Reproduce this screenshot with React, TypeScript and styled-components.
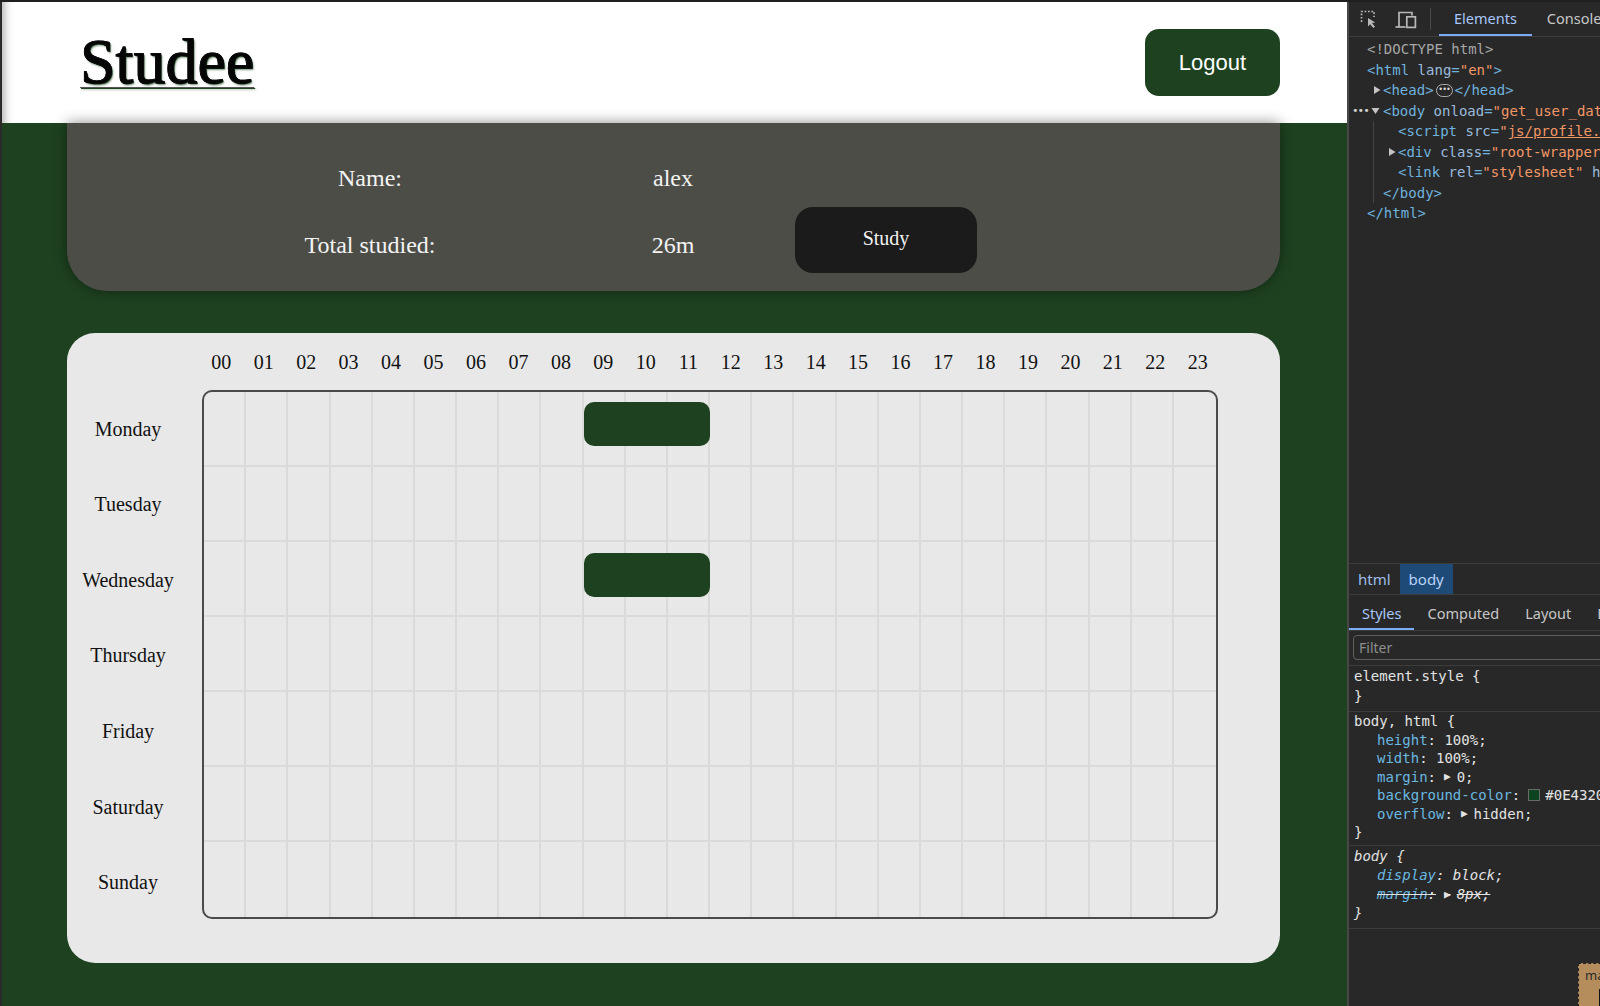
import React from "react";
import styled, { createGlobalStyle } from "styled-components";

const GREEN = "#1e4220";
const SERIF = `"Liberation Serif", "Times New Roman", serif`;
const SANS = `"Liberation Sans", Arial, sans-serif`;
const UI = `"Noto Sans", "Open Sans", sans-serif`;
const MONO = `"DejaVu Sans Mono", "Liberation Mono", monospace`;

const Global = createGlobalStyle`
  html, body { margin: 0; padding: 0; width: 1600px; height: 1006px; overflow: hidden; background: #1f1f1f; }
  *, *::before, *::after { box-sizing: border-box; }
`;

const Frame = styled.div`
  width: 1600px;
  height: 1006px;
  border-top: 2px solid #1f1f1f;
  display: flex;
  overflow: hidden;
`;

/* ---------------- page ---------------- */

const Page = styled.div`
  flex: 0 0 1347px;
  height: 100%;
  background: ${GREEN};
  border-left: 2px solid #2a2a2a;
  display: flex;
  flex-direction: column;
`;

const Header = styled.header`
  height: 121px;
  flex-shrink: 0;
  background: #ffffff;
  display: flex;
  align-items: center;
  justify-content: space-between;
  padding: 0 67px 0 78px;
  box-shadow: inset 12px 0 10px -10px rgba(0, 0, 0, 0.35);
`;

const Logo = styled.a`
  font-family: ${SERIF};
  font-size: 64px;
  font-weight: 400;
  line-height: 1;
  color: #050505;
  text-decoration: underline;
  text-decoration-color: #555;
  text-decoration-thickness: 1px;
  text-underline-offset: 4px;
  text-shadow: 1px 1px 0 ${GREEN}, 1.5px 1.5px 2px rgba(30, 66, 32, 0.6);
  -webkit-text-stroke: 0.8px #0a0a0a;
  margin-top: -2px;
`;

const LogoutButton = styled.button`
  width: 135px;
  height: 67px;
  border: none;
  border-radius: 14px;
  background: ${GREEN};
  color: #ffffff;
  font-family: ${SANS};
  font-size: 22px;
  cursor: pointer;
`;

const Main = styled.main`
  padding: 0 67px 0 65px;
  display: flex;
  flex-direction: column;
`;

const ProfileCard = styled.section`
  position: relative;
  z-index: 1;
  background: #4d4d48;
  border-radius: 0 0 40px 40px;
  box-shadow: 0 0 14px rgba(0, 0, 0, 0.45);
  padding: 22px 0 14px 122px;
  display: grid;
  grid-template-columns: 362px 244px 182px;
  grid-template-rows: 66px 66px;
  color: #f3f3f3;
  font-family: ${SERIF};
  font-size: 24px;
`;

const InfoCell = styled.div<{ $row: number; $col: number }>`
  grid-row: ${(p) => p.$row};
  grid-column: ${(p) => p.$col};
  display: flex;
  align-items: center;
  justify-content: center;
  padding-top: ${(p) => (p.$row === 2 ? 2 : 0)}px;
`;

const StudyButton = styled.button`
  grid-row: 2;
  grid-column: 3;
  align-self: start;
  margin-top: -4px;
  width: 182px;
  height: 66px;
  border: none;
  border-radius: 18px;
  background: #1b1b1b;
  color: #f2f2f2;
  font-family: ${SERIF};
  font-size: 20px;
  padding-bottom: 4px;
  cursor: pointer;
`;

const ScheduleCard = styled.section`
  margin-top: 42px;
  height: 630px;
  background: #e8e8e8;
  border-radius: 28px;
  padding: 11px 0 44px 0;
  display: grid;
  grid-template-columns: 122px 1016px;
  grid-template-rows: 36px 529px;
  column-gap: 13px;
  row-gap: 10px;
  font-family: ${SERIF};
  font-size: 20px;
  color: #111;
`;

const HourRow = styled.div`
  grid-row: 1;
  grid-column: 2;
  margin: 0 -1px 0 -2px;
  display: grid;
  grid-template-columns: repeat(24, 1fr);
`;

const HourLabel = styled.div`
  text-align: center;
  line-height: 36px;
`;

const DayColumn = styled.div`
  grid-row: 2;
  grid-column: 1;
  display: grid;
  grid-template-rows: repeat(7, 1fr);
`;

const DayLabel = styled.div`
  display: flex;
  align-items: center;
  justify-content: center;
  padding-top: 3px;
`;

const Grid = styled.div`
  grid-row: 2;
  grid-column: 2;
  border: 2px solid #4a4a4a;
  border-radius: 10px;
  overflow: hidden;
  display: grid;
  grid-template-rows: repeat(7, 1fr);
`;

const GridRow = styled.div`
  display: grid;
  grid-template-columns: repeat(24, 1fr);
  border-bottom: 2px solid #dadada;
  &:last-child {
    border-bottom: none;
  }
`;

const GridCell = styled.div<{ $col: number }>`
  grid-row: 1;
  grid-column: ${(p) => p.$col};
  border-right: 2px solid #dadada;
  &:nth-child(24) {
    border-right: none;
  }
`;

const StudyBlock = styled.div<{ $start: number; $span: number; $top: number }>`
  grid-row: 1;
  grid-column: ${(p) => p.$start + 1} / span ${(p) => p.$span};
  align-self: start;
  margin-top: ${(p) => p.$top}px;
  height: 44px;
  background: ${GREEN};
  border-radius: 10px;
`;

/* ---------------- devtools ---------------- */

const Dev = styled.aside`
  flex: 1;
  height: 100%;
  background: #282828;
  border-left: 2px solid #474747;
  display: flex;
  flex-direction: column;
  overflow: hidden;
  font-family: ${UI};
  color: #c7c7c7;
  white-space: nowrap;
`;

const DevToolbar = styled.div`
  height: 35px;
  flex-shrink: 0;
  border-bottom: 1px solid #3d3d3d;
  display: flex;
  align-items: stretch;
  padding-left: 11px;
`;

const ToolIcon = styled.svg<{ $gap: number }>`
  align-self: center;
  margin-right: ${(p) => p.$gap}px;
  flex-shrink: 0;
`;

const ToolSep = styled.div`
  width: 1px;
  height: 22px;
  align-self: center;
  background: #4a4a4a;
  margin-right: 8px;
  flex-shrink: 0;
`;

const DevTab = styled.div<{ $active?: boolean }>`
  padding: 0 15px;
  display: flex;
  align-items: center;
  font-size: 14.5px;
  color: ${(p) => (p.$active ? "#a8c7fa" : "#c7c7c7")};
  border-bottom: 2px solid ${(p) => (p.$active ? "#7cacf8" : "transparent")};
  flex-shrink: 0;
`;

const Tree = styled.div`
  flex: 0 0 526px;
  padding-top: 2px;
  font-family: ${MONO};
  font-size: 14px;
  line-height: 20.5px;
  color: #e3e3e3;
`;

const TreeLine = styled.div<{ $indent: number }>`
  padding-left: ${(p) => p.$indent}px;
  height: 20.5px;
  display: flex;
  align-items: center;
  & > * {
    flex-shrink: 0;
  }
`;

const Guide = styled.div`
  margin-left: 24px;
  border-left: 1px solid #444;
`;

const Tag = styled.span`
  color: #6fb2de;
`;
const AttrName = styled.span`
  color: #9bbbdc;
`;
const AttrVal = styled.span<{ $link?: boolean }>`
  color: #f29766;
  text-decoration: ${(p) => (p.$link ? "underline" : "none")};
`;
const Doctype = styled.span`
  color: #a6a6a6;
`;

const Arrow = styled.svg<{ $w: number }>`
  margin-left: -${(p) => p.$w}px;
  width: ${(p) => p.$w}px;
`;

const SelDots = styled.span`
  width: 19px;
  margin-left: -31px;
  font-size: 11px;
  color: #d0d0d0;
  letter-spacing: -1px;
`;

const Ellipsis = styled.span`
  display: inline-flex;
  align-items: center;
  justify-content: center;
  width: 17px;
  height: 13px;
  margin: 0 2px;
  border: 1px solid #b0b0b0;
  border-radius: 7px;
  font-size: 8px;
  letter-spacing: -1px;
  line-height: 1;
  color: #d8d8d8;
`;

const Crumbs = styled.div`
  height: 31px;
  flex-shrink: 0;
  border-top: 1px solid #3d3d3d;
  display: flex;
  align-items: stretch;
  font-size: 15px;
`;

const Crumb = styled.div<{ $active?: boolean }>`
  padding: 0 9px;
  display: flex;
  align-items: center;
  color: ${(p) => (p.$active ? "#b9d3f7" : "#9fbde6")};
  background: ${(p) => (p.$active ? "#1d4a77" : "transparent")};
`;

const SubTabs = styled.div`
  height: 37px;
  flex-shrink: 0;
  border-top: 1px solid #3d3d3d;
  border-bottom: 1px solid #3d3d3d;
  display: flex;
  align-items: stretch;
`;

const SubTab = styled.div<{ $active?: boolean }>`
  padding: 2px 13px 0;
  display: flex;
  align-items: center;
  font-size: 14.5px;
  color: ${(p) => (p.$active ? "#a8c7fa" : "#c7c7c7")};
  border-bottom: 2px solid ${(p) => (p.$active ? "#7cacf8" : "transparent")};
  flex-shrink: 0;
`;

const FilterRow = styled.div`
  height: 35px;
  flex-shrink: 0;
  padding: 4px 0 0 4px;
  border-bottom: 1px solid #3d3d3d;
`;

const FilterBox = styled.div`
  width: 300px;
  height: 25px;
  border: 1px solid #5e5e5e;
  border-radius: 4px;
  padding-left: 5px;
  display: flex;
  align-items: center;
  font-size: 14px;
  color: #8f8f8f;
`;

const Rule = styled.div<{ $lh: number; $pt: number; $h: number }>`
  height: ${(p) => p.$h}px;
  flex-shrink: 0;
  padding: ${(p) => p.$pt}px 0 0 5px;
  border-bottom: 1px solid #3d3d3d;
  font-family: ${MONO};
  font-size: 14px;
  line-height: ${(p) => p.$lh}px;
  color: #e3e3e3;
`;

const RuleLine = styled.div<{ $prop?: boolean; $italic?: boolean; $strike?: boolean }>`
  display: flex;
  align-items: center;
  padding-left: ${(p) => (p.$prop ? 23 : 0)}px;
  font-style: ${(p) => (p.$italic ? "italic" : "normal")};
  text-decoration: ${(p) => (p.$strike ? "line-through" : "none")};
  & > * {
    flex-shrink: 0;
  }
`;

const Prop = styled.span`
  color: #6ab8e0;
`;

const Expander = styled.span`
  font-size: 11px;
  margin: 0 6px 0 8px;
`;

const Swatch = styled.span`
  display: inline-block;
  width: 12px;
  height: 12px;
  margin: 0 5px 0 8px;
  background: #0e4320;
  border: 1px solid #6a6a6a;
`;

const BoxArea = styled.div`
  flex: 1;
  padding: 34px 0 0 229px;
  overflow: hidden;
`;

const MarginBox = styled.div`
  width: 120px;
  height: 80px;
  background: #b58d5d;
  border: 1px dashed #222;
  padding: 2px 0 0 6px;
  font-size: 13px;
  color: #2a2a2a;
  line-height: 18px;
`;

const BorderBox = styled.div`
  margin: 5px 0 0 14px;
  height: 50px;
  border: 1px solid #111;
`;

/* ---------------- data ---------------- */

const HOURS = Array.from({ length: 24 }, (_, i) => String(i).padStart(2, "0"));
const DAYS = ["Monday", "Tuesday", "Wednesday", "Thursday", "Friday", "Saturday", "Sunday"];
const SESSIONS: Record<string, { start: number; span: number; top: number }[]> = {
  Monday: [{ start: 9, span: 3, top: 10 }],
  Wednesday: [{ start: 9, span: 3, top: 11 }],
};

const RightTri = () => (
  <Arrow $w={10} height="10" viewBox="0 0 10 10">
    <path d="M1 1 L7.5 5 L1 9 Z" fill="#c4c4c4" />
  </Arrow>
);

const DownTri = () => (
  <svg width="12" height="10" viewBox="0 0 12 10">
    <path d="M0.5 2 L8.5 2 L4.5 8 Z" fill="#c4c4c4" />
  </svg>
);

export default function App() {
  return (
    <>
      <Global />
      <Frame>
        <Page>
          <Header>
            <Logo href="#">Studee</Logo>
            <LogoutButton>Logout</LogoutButton>
          </Header>
          <Main>
            <ProfileCard>
              <InfoCell $row={1} $col={1}>Name:</InfoCell>
              <InfoCell $row={1} $col={2}>alex</InfoCell>
              <InfoCell $row={2} $col={1}>Total studied:</InfoCell>
              <InfoCell $row={2} $col={2}>26m</InfoCell>
              <StudyButton>Study</StudyButton>
            </ProfileCard>
            <ScheduleCard>
              <HourRow>
                {HOURS.map((h) => (
                  <HourLabel key={h}>{h}</HourLabel>
                ))}
              </HourRow>
              <DayColumn>
                {DAYS.map((d) => (
                  <DayLabel key={d}>{d}</DayLabel>
                ))}
              </DayColumn>
              <Grid>
                {DAYS.map((d) => (
                  <GridRow key={d}>
                    {HOURS.map((h, i) => (
                      <GridCell key={h} $col={i + 1} />
                    ))}
                    {(SESSIONS[d] || []).map((s, i) => (
                      <StudyBlock key={i} $start={s.start} $span={s.span} $top={s.top} />
                    ))}
                  </GridRow>
                ))}
              </Grid>
            </ScheduleCard>
          </Main>
        </Page>

        <Dev>
          <DevToolbar>
            <ToolIcon $gap={16} width="19" height="19" viewBox="0 0 19 19" fill="none">
              <path
                d="M1.5 12 V1.5 H14 V7"
                stroke="#b8b8b8"
                strokeWidth="1.7"
                strokeDasharray="1.7 1.7"
              />
              <path d="M8 8 L8 16.5 L10.2 14.2 L13.3 18 L15 16.7 L12 13 L15.2 12.4 Z" fill="#b8b8b8" />
            </ToolIcon>
            <ToolIcon $gap={13} width="22" height="19" viewBox="0 0 22 19" fill="none">
              <path d="M4 17 V2.5 H17 V5.5" stroke="#b8b8b8" strokeWidth="1.7" />
              <path d="M0.5 17 H10.5" stroke="#b8b8b8" strokeWidth="1.7" />
              <rect x="11.8" y="6.8" width="8.6" height="10.6" stroke="#b8b8b8" strokeWidth="1.7" />
            </ToolIcon>
            <ToolSep />
            <DevTab $active>Elements</DevTab>
            <DevTab>Console</DevTab>
          </DevToolbar>

          <Tree>
            <TreeLine $indent={18}>
              <Doctype>&lt;!DOCTYPE html&gt;</Doctype>
            </TreeLine>
            <TreeLine $indent={18}>
              <Tag>&lt;html</Tag>&nbsp;<AttrName>lang</AttrName>
              <Tag>=</Tag>
              <AttrVal>"en"</AttrVal>
              <Tag>&gt;</Tag>
            </TreeLine>
            <TreeLine $indent={34}>
              <RightTri />
              <Tag>&lt;head&gt;</Tag>
              <Ellipsis>•••</Ellipsis>
              <Tag>&lt;/head&gt;</Tag>
            </TreeLine>
            <TreeLine $indent={34}>
              <SelDots>•••</SelDots>
              <DownTri />
              <Tag>&lt;body</Tag>&nbsp;<AttrName>onload</AttrName>
              <Tag>=</Tag>
              <AttrVal>"get_user_data()"</AttrVal>
            </TreeLine>
            <Guide>
              <TreeLine $indent={24}>
                <Tag>&lt;script</Tag>&nbsp;<AttrName>src</AttrName>
                <Tag>=</Tag>
                <AttrVal>"</AttrVal>
                <AttrVal $link>js/profile.js</AttrVal>
              </TreeLine>
              <TreeLine $indent={24}>
                <RightTri />
                <Tag>&lt;div</Tag>&nbsp;<AttrName>class</AttrName>
                <Tag>=</Tag>
                <AttrVal>"root-wrapper"</AttrVal>
              </TreeLine>
              <TreeLine $indent={24}>
                <Tag>&lt;link</Tag>&nbsp;<AttrName>rel</AttrName>
                <Tag>=</Tag>
                <AttrVal>"stylesheet"</AttrVal>&nbsp;<AttrName>href</AttrName>
              </TreeLine>
              <TreeLine $indent={9}>
                <Tag>&lt;/body&gt;</Tag>
              </TreeLine>
            </Guide>
            <TreeLine $indent={18}>
              <Tag>&lt;/html&gt;</Tag>
            </TreeLine>
          </Tree>

          <Crumbs>
            <Crumb>html</Crumb>
            <Crumb $active>body</Crumb>
          </Crumbs>

          <SubTabs>
            <SubTab $active>Styles</SubTab>
            <SubTab>Computed</SubTab>
            <SubTab>Layout</SubTab>
            <SubTab>Event Listeners</SubTab>
          </SubTabs>

          <FilterRow>
            <FilterBox>Filter</FilterBox>
          </FilterRow>

          <Rule $h={46} $pt={0} $lh={20}>
            <RuleLine>element.style {"{"}</RuleLine>
            <RuleLine>{"}"}</RuleLine>
          </Rule>

          <Rule $h={134} $pt={0} $lh={18.5}>
            <RuleLine>body, html {"{"}</RuleLine>
            <RuleLine $prop>
              <Prop>height</Prop>:&nbsp;100%;
            </RuleLine>
            <RuleLine $prop>
              <Prop>width</Prop>:&nbsp;100%;
            </RuleLine>
            <RuleLine $prop>
              <Prop>margin</Prop>:<Expander>▶</Expander>0;
            </RuleLine>
            <RuleLine $prop>
              <Prop>background-color</Prop>:<Swatch />#0E4320;
            </RuleLine>
            <RuleLine $prop>
              <Prop>overflow</Prop>:<Expander>▶</Expander>hidden;
            </RuleLine>
            <RuleLine>{"}"}</RuleLine>
          </Rule>

          <Rule $h={83} $pt={1} $lh={19}>
            <RuleLine $italic>body {"{"}</RuleLine>
            <RuleLine $prop $italic>
              <Prop>display</Prop>:&nbsp;block;
            </RuleLine>
            <RuleLine $prop $italic $strike>
              <Prop>margin</Prop>:<Expander>▶</Expander>8px;
            </RuleLine>
            <RuleLine $italic>{"}"}</RuleLine>
          </Rule>

          <BoxArea>
            <MarginBox>
              margin
              <BorderBox />
            </MarginBox>
          </BoxArea>
        </Dev>
      </Frame>
    </>
  );
}
